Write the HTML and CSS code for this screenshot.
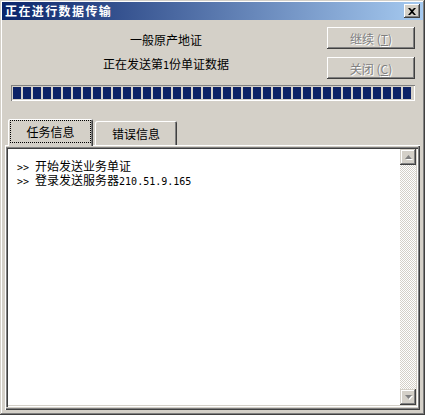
FILE: index.html
```html
<!DOCTYPE html>
<html>
<head>
<meta charset="utf-8">
<link rel="stylesheet" href="styles.css">
</head>
<body>
<div class="window">
  <div class="titlebar">
    <span class="title">正在进行数据传输</span>
    <span class="close"><svg width="8" height="7" viewBox="0 0 8 7"><path d="M0 0h2l2 2 2-2h2L5 3.5 8 7H6L4 5 2 7H0l3-3.5z" fill="#000"/></svg></span>
  </div>
  <div class="body">
    <div class="top">
      <div class="info">
        <div class="line">一般原产地证</div>
        <div class="line">正在发送第<span class="lat">1</span>份单证数据</div>
      </div>
      <div class="buttons">
        <div class="btn">继续 (<u>T</u>)</div>
        <div class="btn">关闭 (<u>C</u>)</div>
      </div>
    </div>
    <div class="progress"><div class="fill"></div></div>
    <div class="tabs">
      <div class="tab active"><span class="focus">任务信息</span></div>
      <div class="tab">错误信息</div>
    </div>
    <div class="panel">
      <div class="field">
        <div class="log">
          <div class="logline"><span class="lat">&gt;&gt; </span>开始发送业务单证</div>
          <div class="logline"><span class="lat">&gt;&gt; </span>登录发送服务器<span class="lat">210.51.9.165</span></div>
        </div>
        <div class="scrollbar">
          <div class="sbtn"><svg width="7" height="4" viewBox="0 0 7 4"><path d="M3.5 0L7 4H0z" fill="#808080"/></svg></div>
          <div class="track"></div>
          <div class="sbtn"><svg width="7" height="4" viewBox="0 0 7 4"><path d="M0 0h7L3.5 4z" fill="#808080"/></svg></div>
        </div>
      </div>
    </div>
  </div>
</div>
</body>
</html>
```

FILE: styles.css
```css
* { box-sizing: border-box; }
html, body { margin: 0; padding: 0; }
body {
  background: #d4d0c8;
  font-family: "Noto Sans CJK SC", "Noto Sans", sans-serif;
  font-size: 12px;
  color: #000;
}
.window {
  width: 425px;
  height: 415px;
  background: #d4d0c8;
  padding: 2px;
  display: flex;
  flex-direction: column;
  box-shadow: inset -1px -1px #404040, inset 1px 1px #d4d0c8, inset -2px -2px #808080, inset 2px 2px #fff;
}
.titlebar {
  height: 18px;
  background: linear-gradient(to right, #0a246a, #a6caf0);
  display: flex;
  align-items: center;
  justify-content: space-between;
  padding: 0 3px 0 3px;
}
.title {
  color: #fff;
  font-weight: bold;
  font-size: 12px;
  letter-spacing: 1.4px;
  line-height: 18px;
}
.close {
  width: 16px;
  height: 14px;
  background: #d4d0c8;
  display: flex;
  align-items: center;
  justify-content: center;
  box-shadow: inset -1px -1px #404040, inset 1px 1px #fff, inset -2px -2px #808080;
}
.body {
  flex: 1;
  display: flex;
  flex-direction: column;
  padding: 0 3px 3px 3px;
}
.lat {
  font-family: "DejaVu Sans Mono", "Liberation Mono", monospace;
  font-size: 10px;
}
.top {
  margin: 7px 5px 0 6px;
  display: flex;
  height: 52px;
}
.info {
  flex: 1;
  display: flex;
  flex-direction: column;
  align-items: center;
  padding-top: 5px;
  padding-right: 6px;
  gap: 8px;
}
.line {
  line-height: 16px;
  height: 16px;
}
.buttons {
  width: 88px;
  display: flex;
  flex-direction: column;
  gap: 8px;
}
.btn {
  height: 22px;
  display: flex;
  align-items: center;
  justify-content: center;
  color: #808080;
  text-shadow: 1px 1px 0 #fff;
  box-shadow: inset -1px -1px #404040, inset 1px 1px #fff, inset -2px -2px #808080;
  padding-top: 1px;
}
.btn u { text-decoration: underline; }
.progress {
  margin: 6px 5px 0 6px;
  height: 16px;
  padding: 2px;
  box-shadow: inset 1px 1px #808080, inset -1px -1px #fff;
}
.fill {
  width: 400px;
  height: 12px;
  background: repeating-linear-gradient(to right, #0c2266 0 8px, transparent 8px 10px);
}
.tabs {
  margin-top: 18px;
  height: 26px;
  display: flex;
  align-items: flex-end;
  padding-left: 3px;
}
.tab {
  height: 24px;
  width: 82px;
  display: flex;
  align-items: center;
  justify-content: center;
  padding-top: 1px;
  box-shadow: inset 1px 1px #fff, inset -1px 0 #404040, inset -2px 0 #808080;
  border-radius: 2px 2px 0 0;
  margin-left: 2px;
}
.tab.active {
  height: 27px;
  width: 85px;
  margin-left: 0;
  margin-bottom: -1px;
  position: relative;
  z-index: 1;
  background: #d4d0c8;
  padding-top: 0;
  padding-bottom: 2px;
}
.focus {
  width: 81px;
  height: 23px;
  display: flex;
  align-items: center;
  justify-content: center;
  outline: 1px dotted #000;
  outline-offset: -1px;
}
.panel {
  flex: 1;
  padding: 2px 2px 3px 1px;
  box-shadow: inset 1px 1px #fff, inset -1px -1px #404040, inset -2px -2px #808080;
  display: flex;
}
.field {
  flex: 1;
  background: #fff;
  padding: 2px;
  display: flex;
  box-shadow: inset 1px 1px #808080, inset 2px 2px #404040, inset -1px -1px #fff, inset -2px -2px #d4d0c8;
}
.log {
  flex: 1;
  padding: 11px 0 0 9px;
  font-family: "Liberation Sans", "Noto Sans CJK SC", sans-serif;
}
.logline {
  line-height: 14px;
  height: 14px;
  white-space: nowrap;
}
.scrollbar {
  width: 16px;
  display: flex;
  flex-direction: column;
}
.sbtn {
  height: 16px;
  background: #d4d0c8;
  display: flex;
  align-items: center;
  justify-content: center;
  box-shadow: inset -1px -1px #404040, inset 1px 1px #d4d0c8, inset -2px -2px #808080, inset 2px 2px #fff;
}
.sbtn svg { filter: drop-shadow(1px 1px 0 #fff); }
.track {
  flex: 1;
  background-color: #fff;
  background-image: repeating-conic-gradient(#d4d0c8 0 25%, #fff 0 50%);
  background-size: 2px 2px;
}
```
